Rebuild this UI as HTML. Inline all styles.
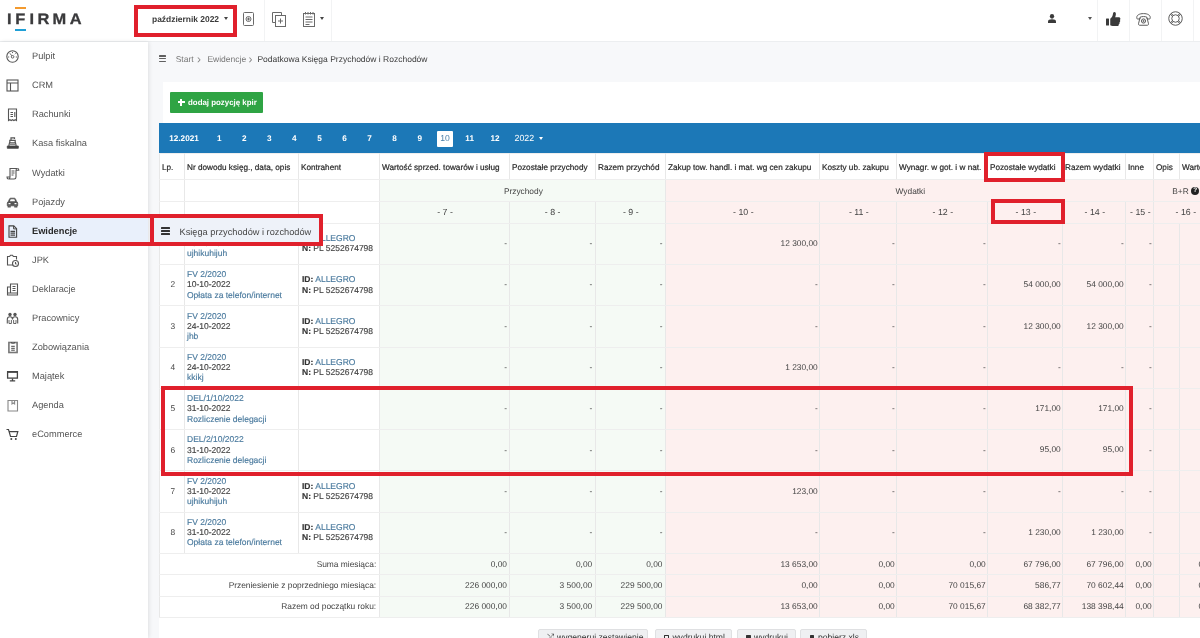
<!DOCTYPE html>
<html lang="pl">
<head>
<meta charset="utf-8">
<title>IFIRMA - Podatkowa Księga Przychodów i Rozchodów</title>
<style>
*{box-sizing:border-box;margin:0;padding:0}
html,body{text-rendering:geometricPrecision;width:1200px;height:638px;overflow:hidden;background:#f7f8fa;font-family:"Liberation Sans",Arial,sans-serif;color:#444;}
body{position:relative}
.abs{position:absolute}
#topbar{left:0;top:0;width:1200px;height:42px;background:#fff;border-bottom:1px solid #eceef0}
#topbar .sep{position:absolute;top:0;width:1px;height:41px;background:#f2f3f4}
#topbar svg{position:absolute;overflow:visible}
#month{position:absolute;left:152px;top:13px;font-size:8.45px;font-weight:bold;color:#3a3a3a;line-height:12px;white-space:nowrap}
.caret{position:absolute;width:0;height:0;border-left:2.5px solid transparent;border-right:2.5px solid transparent;border-top:3px solid #444}
#sidebar{left:0;top:42px;width:148px;height:596px;background:#fff;box-shadow:1px 0 4px rgba(0,0,0,.10)}
.logo{position:absolute;left:8px;top:9px;font-size:17.5px;letter-spacing:3.4px;font-weight:bold;color:#3a3a3c;line-height:22px}
.mi{position:absolute;left:0;width:148px;height:29px;font-size:9.25px;line-height:29px;color:#555}
.mi span{position:absolute;left:32px;top:0}
.mi svg{position:absolute;left:5px;top:7px;width:15px;height:15px;stroke:#555;fill:none;stroke-width:1.1;overflow:visible}
.mi.act{background:#e9f0fb;color:#2a2a2a;font-weight:bold}
.red{position:absolute;border:4px solid #e0202c;z-index:20}
#crumb{left:159px;top:53px;font-size:8.5px;line-height:12px;white-space:nowrap}
#crumb span{position:absolute;top:0}
#crumb .hb i{background:#606060;height:1.400px;margin-bottom:1.300px}
#crumb .ch{color:#888;font-size:12px;top:.3px}
#card{left:163px;top:82px;width:1037px;height:80px;background:#fff}
#card2{left:159px;top:153px;width:1041px;height:490px;background:#fff}
#addbtn{left:170px;top:92px;width:93px;height:20.500px;background:#2fa444;color:#fff;font-size:7.900px;font-weight:bold;line-height:22.500px;padding-left:18px;border-radius:1px;white-space:nowrap}
.plus{position:absolute;left:7.500px;top:6.700px;width:7.500px;height:7.500px}
.plus:before{content:"";position:absolute;left:0;top:2.800px;width:7.500px;height:1.900px;background:#fff}
.plus:after{content:"";position:absolute;left:2.800px;top:0;width:1.900px;height:7.500px;background:#fff}
#bluebar{left:159px;top:123px;width:1041px;height:30px;background:#1c78b7;color:#fff;font-size:8.200px;font-weight:bold;line-height:32px}
#bluebar span{position:absolute;top:0;transform:translateX(-50%);white-space:nowrap}
#bluebar span.sel{font-weight:normal;font-size:8.600px;background:#fff;color:#4a7fa8;top:7.500px;width:16px;height:16px;line-height:15px;text-align:center;border-radius:1px}
table{border-collapse:collapse;table-layout:fixed;position:absolute;left:159px;top:153px;width:1057px;font-size:8.35px;color:#444}
td,th{border:1px solid #e8e8e8;border-top-color:#eeeeee;border-bottom-color:#eeeeee;padding:0 1.300px 0 3px;overflow:hidden;white-space:nowrap;font-weight:normal}
th{text-align:left;color:#222;height:26px;font-size:8.2px;background:#fff;padding:1px 0 0 2px;-webkit-text-stroke:.2px #333}
tr.g td{height:22px;text-align:center;padding-top:1px}
tr.n td{height:21.7px;text-align:center;padding-top:0;font-size:8.8px}
tr.d td{height:41.3px;text-align:right;line-height:10.3px;padding-top:0;padding-bottom:1.500px}
tr.s td{height:21.3px;text-align:right;padding-bottom:1px;font-size:8.4px}
tr.d td.l{-webkit-text-stroke:.15px;text-align:left;font-size:8.5px;line-height:10.2px;padding-top:0;padding-bottom:1.2px}
tr.d td.l2{padding-left:2px}
tr.d td.m{padding-top:0;padding-bottom:1.200px}
tr.d td.c{text-align:center;padding-top:0;padding-bottom:1px}
.gr{background:#f5faf5}
td.g9{padding-right:2.500px}
td.g7{padding-right:2px}
td.g8{padding-right:2.800px}
td.lab{padding-right:2.800px}
.rd{background:#fdf0ef}
a{color:#4a7a9e;text-decoration:none}
b.k{color:#333}
i.q{display:inline-block;width:8.400px;height:8.400px;border-radius:50%;background:#222;color:#fff;font-style:normal;font-size:6.500px;line-height:8.500px;text-align:center;font-weight:bold;vertical-align:1.500px;position:relative;top:-1px}
.btn{position:absolute;top:629px;height:22px;background:#eff0f2;border:1px solid #dfe0e2;font-size:8.600px;line-height:15.600px;color:#333;white-space:nowrap;border-radius:2px}
.btn span{position:absolute;top:0}
.btn i{position:absolute;top:0;font-style:normal;font-size:9px}
.btn i.fo{top:5px;width:4.500px;height:6px;border:1px solid #333;border-radius:.5px}
.btn i.ff{top:5px;width:4.500px;height:6px;background:#333;border-radius:.5px}
#kpir{position:absolute;left:150px;top:215px;width:171px;height:28px;background:#eef2f9;z-index:10;font-size:9.22px;line-height:28px;color:#444;white-space:nowrap}
.hb{position:absolute;width:9px;height:9px}
.hb i{display:block;height:1.7px;background:#333;margin-bottom:1.500px;border-radius:.5px}
#wrap{position:absolute;left:0;top:0;width:1200px;height:638px;overflow:hidden;will-change:transform}
</style>
</head>
<body><div id="wrap">
<div id="topbar" class="abs">
 <svg style="left:0;top:0" width="100" height="42"><text transform="scale(1.08,1)" x="6.57 14.12 27.41 34.63 48.52 64.54" y="24.400" font-family="Liberation Sans, Arial, sans-serif" font-weight="bold" font-size="15.200" fill="#3a3a3c" stroke="#3a3a3c" stroke-width=".3">IFIRMA</text></svg>
 <div class="abs" style="left:15px;top:6.700px;width:10.500px;height:2.200px;background:#f39a2e"></div>
 <div class="abs" style="left:15px;top:28.700px;width:10.800px;height:2.200px;background:#1f9fd6"></div>
 <div id="month">październik 2022</div>
 <div class="caret" style="left:223.5px;top:17px"></div>
 <div class="sep" style="left:264px"></div>
 <div class="sep" style="left:331px"></div>
 <svg style="left:243px;top:12px" width="11" height="14" viewBox="0 0 11 14" fill="none" stroke="#6a6a6a" stroke-width="1"><rect x=".5" y=".5" width="10" height="13" rx="1"/><circle cx="5.500" cy="7" r="2.500"/><path d="M4 7h3M5.500 5.500v3"/></svg>
 <svg style="left:272px;top:11.500px" width="14" height="15" viewBox="0 0 14 15" fill="none" stroke="#6a6a6a" stroke-width="1"><path d="M3.500 10.500H.5V.5h9v3"/><rect x="3.500" y="3.500" width="10" height="11" fill="#fff"/><path d="M6 9h5M8.500 6.500v5"/></svg>
 <svg style="left:303px;top:11.500px" width="12" height="15" viewBox="0 0 12 15" fill="none" stroke="#6a6a6a" stroke-width="1"><rect x=".5" y="1.500" width="11" height="13"/><path d="M2.500 0v2.500M5 0v2.500M7.500 0v2.500M10 0v2.500M2.500 5h7M2.500 7.500h7M2.500 10h7M2.500 12.500h4"/></svg>
 <div class="caret" style="left:319.500px;top:17px"></div>
 <svg style="left:1047.700px;top:14.200px" width="8" height="9" viewBox="0 0 9 9.500" preserveAspectRatio="none" fill="#3a3a3a"><circle cx="4.500" cy="2.500" r="2.400"/><path d="M0 9.500V7.800C0 6.300 1.500 5.500 4.500 5.500S9 6.300 9 7.800V9.500z"/></svg>
 <div class="caret" style="left:1088px;top:17px;border-top-color:#555"></div>
 <div class="sep" style="left:1097px"></div>
 <svg style="left:1106px;top:12px" width="14.500" height="14" viewBox="0 0 29 28" fill="#3a3a3a"><rect x="0" y="13" width="6" height="14" rx="1"/><path d="M8.500 13.500c3-2 5-6 5.500-10 .2-2 1-3.500 2.800-3.500 2.500 0 3.200 2.500 2.900 5-.2 2-.8 4-1.400 5.500h7c2 0 3.500 1.300 3.500 3 0 1-.5 1.800-1.200 2.300.6.500.9 1.200.9 2 0 1.200-.7 2.100-1.700 2.500.3.400.5 1 .5 1.600 0 1.200-.8 2.200-1.900 2.500.1.300.2.600.2 1 0 1.500-1.300 2.600-3 2.600H13.500c-2 0-3.500-.7-5-1.500z"/></svg>
 <div class="sep" style="left:1129px"></div>
 <svg style="left:1136px;top:12.500px" width="15" height="13" viewBox="0 0 30 26" fill="none" stroke="#555" stroke-width="1.900"><path d="M1.500 9C1.500 4 7 1.200 15 1.200S28.500 4 28.500 9v1.500c0 1-1 1.500-2 1.500h-3c-1 0-1.800-.6-1.800-1.500V8.300c-2-.9-4.300-1.200-6.700-1.200s-4.700.3-6.700 1.200v2.200c0 .9-.8 1.500-1.800 1.500h-3c-1 0-2-.5-2-1.500z"/><path d="M8 9.500L5 21.500c-.3 1.500.5 3 2.500 3h15c2 0 2.800-1.500 2.500-3L22 9.500"/><circle cx="15" cy="16" r="4.200"/><circle cx="15" cy="16" r="1.300"/></svg>
 <div class="sep" style="left:1161px"></div>
 <svg style="left:1168px;top:11px" width="15" height="15" viewBox="0 0 30 30" fill="none" stroke="#555" stroke-width="1.900"><circle cx="15" cy="15" r="13.500"/><circle cx="15" cy="15" r="7.500"/><path d="M5.500 5.500l4.200 4.200M24.500 5.500l-4.200 4.200M5.500 24.500l4.200-4.200M24.500 24.500l-4.200-4.200" stroke-width="3.600"/><path d="M5.500 5.500l4.200 4.200M24.500 5.500l-4.200 4.200M5.500 24.500l4.200-4.200M24.500 24.500l-4.200-4.200" stroke="#fff" stroke-width="1.200"/></svg>
 <div class="sep" style="left:1193px"></div>
</div>
<div class="red" style="left:134px;top:5px;width:103px;height:32px"></div>
<div id="sidebar" class="abs">
 <div class="mi" style="top:0.1px"><svg viewBox="0 0 15 15"><circle cx="7.500" cy="7.500" r="5.700"/><circle cx="7.600" cy="7.800" r="1.300" stroke-width=".9"/><path d="M6.800 6.800L4.900 4.300M3 8h1.200M10.800 8H12M7.500 3v1.100M10.600 4.400l-.8.800" stroke-width=".9"/></svg><span>Pulpit</span></div>
 <div class="mi" style="top:29.2px"><svg viewBox="0 0 15 15"><rect x="2" y="2" width="11" height="11"/><path d="M2 5h11M5.500 5v8"/></svg><span>CRM</span></div>
 <div class="mi" style="top:58.3px"><svg viewBox="0 0 15 15"><path d="M3.500 2h8v11.500l-1.300-.8-1.300.8-1.400-.8-1.300.8-1.300-.8-1.400.8z"/><path d="M5.500 5.500h2.500M5.500 7.500h2.500M5.500 9.500h2.500M9.800 5v5" /></svg><span>Rachunki</span></div>
 <div class="mi" style="top:87.4px"><svg viewBox="0 0 15 15"><path d="M2.300 10h11v2.300h-11z" fill="#444" stroke="#444" stroke-width=".8"/><path d="M3.800 10l.7-3.200h6l.7 3.200M4.800 6.800V4.300h5.400v2.500M6 4.300V1.800h3.500v1.200" stroke-width="1.200" stroke="#555"/><path d="M4.500 8.400h6" stroke="#777" stroke-width="1"/></svg><span>Kasa fiskalna</span></div>
 <div class="mi" style="top:116.5px"><svg viewBox="0 0 15 15"><path d="M5 2.500h7.500c-1 0-1.500.8-1.500 2v6.500c0 1.200-.7 2-1.800 2H3.500c1 0 1.500-.8 1.500-2z"/><path d="M12.500 2.500c.8 0 1.300.7 1.300 1.700h-2.800M3.500 13c-.9 0-1.500-.8-1.500-2h3M6.500 5h3M6.500 7h3M6.500 9h2"/></svg><span>Wydatki</span></div>
 <div class="mi" style="top:145.6px"><svg viewBox="0 0 15 15"><path d="M2.300 8.200c0-.9.500-1.400 1.100-1.600L4.500 4c.2-.5.600-.8 1.200-.8h3.600c.6 0 1 .3 1.200.8l1.100 2.600c.6.200 1.100.7 1.100 1.600v2.600H2.300z" fill="#555" stroke="#555" stroke-width=".8"/><path d="M3.300 10.800v1h1.800v-1M9.900 10.800v1h1.800v-1" stroke="#555" stroke-width="1.300"/><path d="M4.900 6.200l.8-1.900h3.600l.8 1.900z" fill="#fff" stroke="none"/><path d="M3.500 8.600h2M9.500 8.600h2" stroke="#fff" stroke-width="1.100"/></svg><span>Pojazdy</span></div>
 <div class="mi act" style="top:174.7px"><svg viewBox="0 0 15 15"><path d="M4 1.900h4.800l2.800 2.800v8.500H4z" stroke="#444" stroke-width="1.100"/><path d="M8.600 2v2.900h2.900" stroke="#444" stroke-width="1"/><path d="M5.500 7.300h4.600M5.500 9.200h4.600M5.500 11.100h4.600" stroke="#444" stroke-width="1.200"/></svg><span>Ewidencje</span></div>
 <div class="mi" style="top:203.8px"><svg viewBox="0 0 15 15"><path d="M8 12H2.500V3.500h2l1-1.200h2l1 1.200h3v3"/><circle cx="10.500" cy="10.500" r="3"/><path d="M10.500 9v1.700l1 .6"/></svg><span>JPK</span></div>
 <div class="mi" style="top:232.9px"><svg viewBox="0 0 15 15"><path d="M5.500 2h7v9h-7zM5.500 5H2.500v8h10v-2M7.500 4.500h3M7.500 6.500h3M7.500 8.500h3M2.500 11h3"/></svg><span>Deklaracje</span></div>
 <div class="mi" style="top:262.0px"><svg viewBox="0 0 15 15"><circle cx="5" cy="3.500" r="1.700" fill="#555" stroke="none"/><circle cx="10" cy="3.500" r="1.700" fill="#555" stroke="none"/><path d="M2.300 12.500V8.500c0-1.700 1-2.700 2.700-2.700s2.500 1 2.500 2.700c0-1.700.8-2.700 2.500-2.700s2.700 1 2.700 2.700v4" stroke="#555" stroke-width="1.100"/><path d="M4 9v3.500h2.400V9M8.600 9v3.500H11V9" stroke="#666" stroke-width="1"/></svg><span>Pracownicy</span></div>
 <div class="mi" style="top:291.1px"><svg viewBox="0 0 15 15"><rect x="3.900" y="2.500" width="8.200" height="10" stroke="#777" stroke-width="1.600"/><path d="M6.200 6.300h3.600M6.200 8.300h3.600M6.200 10.200h3.600" stroke="#444" stroke-width="1"/><path d="M6.500 2v1.200h3V2" stroke="#555" stroke-width="1"/></svg><span>Zobowiązania</span></div>
 <div class="mi" style="top:320.2px"><svg viewBox="0 0 15 15"><rect x="2.600" y="2.800" width="9.800" height="6.300" stroke="#444" stroke-width="1.300"/><path d="M2 2.900h11" stroke="#444" stroke-width="1.800"/><path d="M7.500 9.500v2M4.800 11.900h5.400" stroke="#444" stroke-width="1.300"/></svg><span>Majątek</span></div>
 <div class="mi" style="top:349.3px"><svg viewBox="0 0 15 15"><path d="M3 2.500h9.500v10.500H3zM7 2.500v3.500l1.300-1 1.300 1V2.500" stroke="#888"/></svg><span>Agenda</span></div>
 <div class="mi" style="top:378.4px"><svg viewBox="0 0 15 15"><path d="M1.500 2.500h2l2 7h6l1.300-4.800H4.300" stroke="#444" stroke-width="1.200"/><circle cx="6.300" cy="12" r="1" fill="#444" stroke="none"/><circle cx="10.800" cy="12" r="1" fill="#444" stroke="none"/></svg><span>eCommerce</span></div>
</div>
<div class="red" style="left:-0.500px;top:213.700px;width:154.300px;height:32px"></div>
<div id="crumb" class="abs"><span class="hb" style="left:0.300px;top:2.300px;width:7.200px"><i></i><i></i><i></i></span><span style="left:16.700px;color:#777">Start</span><span class="ch" style="left:38px">›</span><span style="left:48.400px;color:#777">Ewidencje</span><span class="ch" style="left:89.500px">›</span><span style="left:98.400px;color:#3c3c3c">Podatkowa Księga Przychodów i Rozchodów</span></div>
<div id="card" class="abs"></div><div id="card2" class="abs"></div>
<div id="addbtn" class="abs"><span class="plus"></span>dodaj pozycję kpir</div>
<div id="bluebar" class="abs">
<span style="left:25px">12.2021</span><span style="left:60.300px">1</span><span style="left:85.300px">2</span><span style="left:110.400px">3</span><span style="left:135.400px">4</span><span style="left:160.500px">5</span><span style="left:185.500px">6</span><span style="left:210.500px">7</span><span style="left:235.500px">8</span><span style="left:260.700px">9</span><span class="sel" style="left:286px">10</span><span style="left:310.700px">11</span><span style="left:336px">12</span><span style="left:365.300px;top:-1px;font-weight:normal;font-size:8.800px">2022</span><div class="caret" style="left:379.800px;top:14px;border-top-color:#fff;border-left-width:2.800px;border-right-width:2.800px"></div>
</div>
<table><colgroup><col style="width:25px"><col style="width:114px"><col style="width:81px"><col style="width:130px"><col style="width:86px"><col style="width:70px"><col style="width:154px"><col style="width:77px"><col style="width:91px"><col style="width:75px"><col style="width:63px"><col style="width:28px"><col style="width:26px"><col style="width:37px"></colgroup><tr class="h"><th>Lp.</th><th>Nr dowodu księg., data, opis</th><th>Kontrahent</th><th>Wartość sprzed. towarów i usług</th><th>Pozostałe przychody</th><th>Razem przychód</th><th>Zakup tow. handl. i mat. wg cen zakupu</th><th>Koszty ub. zakupu</th><th>Wynagr. w got. i w nat.</th><th>Pozostałe wydatki</th><th>Razem wydatki</th><th>Inne</th><th>Opis</th><th>Wartość</th></tr>
<tr class="g"><td></td><td></td><td></td><td class="gr" colspan="3">Przychody</td><td class="rd" colspan="6">Wydatki</td><td class="rd" colspan="2">B+R <i class="q">?</i></td></tr>
<tr class="n"><td class=""></td><td class=""></td><td class=""></td><td class="gr g7">- 7 -</td><td class="gr g8">- 8 -</td><td class="gr g9">- 9 -</td><td class="rd">- 10 -</td><td class="rd">- 11 -</td><td class="rd">- 12 -</td><td class="rd">- 13 -</td><td class="rd">- 14 -</td><td class="rd">- 15 -</td><td class="rd" colspan="2">- 16 -</td></tr>
<tr class="d"><td class="c">1</td><td class="l l2"><a>FV 2/2020</a><br>10-10-2022<br><a>ujhikuhijuh</a></td><td class="l"><b class="k">ID:</b> <a>ALLEGRO</a><br><b class="k">N:</b> PL 5252674798</td><td class="gr g7 m">-</td><td class="gr g8 m">-</td><td class="gr g9 m">-</td><td class="rd">12 300,00</td><td class="rd m">-</td><td class="rd m">-</td><td class="rd m">-</td><td class="rd m">-</td><td class="rd m">-</td><td class="rd"></td><td class="rd"></td></tr>
<tr class="d"><td class="c">2</td><td class="l l2"><a>FV 2/2020</a><br>10-10-2022<br><a>Opłata za telefon/internet</a></td><td class="l"><b class="k">ID:</b> <a>ALLEGRO</a><br><b class="k">N:</b> PL 5252674798</td><td class="gr g7 m">-</td><td class="gr g8 m">-</td><td class="gr g9 m">-</td><td class="rd m">-</td><td class="rd m">-</td><td class="rd m">-</td><td class="rd">54 000,00</td><td class="rd">54 000,00</td><td class="rd m">-</td><td class="rd"></td><td class="rd"></td></tr>
<tr class="d"><td class="c">3</td><td class="l l2"><a>FV 2/2020</a><br>24-10-2022<br><a>jhb</a></td><td class="l"><b class="k">ID:</b> <a>ALLEGRO</a><br><b class="k">N:</b> PL 5252674798</td><td class="gr g7 m">-</td><td class="gr g8 m">-</td><td class="gr g9 m">-</td><td class="rd m">-</td><td class="rd m">-</td><td class="rd m">-</td><td class="rd">12 300,00</td><td class="rd">12 300,00</td><td class="rd m">-</td><td class="rd"></td><td class="rd"></td></tr>
<tr class="d"><td class="c">4</td><td class="l l2"><a>FV 2/2020</a><br>24-10-2022<br><a>kkikj</a></td><td class="l"><b class="k">ID:</b> <a>ALLEGRO</a><br><b class="k">N:</b> PL 5252674798</td><td class="gr g7 m">-</td><td class="gr g8 m">-</td><td class="gr g9 m">-</td><td class="rd">1 230,00</td><td class="rd m">-</td><td class="rd m">-</td><td class="rd m">-</td><td class="rd m">-</td><td class="rd m">-</td><td class="rd"></td><td class="rd"></td></tr>
<tr class="d"><td class="c">5</td><td class="l l2"><a>DEL/1/10/2022</a><br>31-10-2022<br><a>Rozliczenie delegacji</a></td><td class="l"></td><td class="gr g7 m">-</td><td class="gr g8 m">-</td><td class="gr g9 m">-</td><td class="rd m">-</td><td class="rd m">-</td><td class="rd m">-</td><td class="rd">171,00</td><td class="rd">171,00</td><td class="rd m">-</td><td class="rd"></td><td class="rd"></td></tr>
<tr class="d"><td class="c">6</td><td class="l l2"><a>DEL/2/10/2022</a><br>31-10-2022<br><a>Rozliczenie delegacji</a></td><td class="l"></td><td class="gr g7 m">-</td><td class="gr g8 m">-</td><td class="gr g9 m">-</td><td class="rd m">-</td><td class="rd m">-</td><td class="rd m">-</td><td class="rd">95,00</td><td class="rd">95,00</td><td class="rd m">-</td><td class="rd"></td><td class="rd"></td></tr>
<tr class="d"><td class="c">7</td><td class="l l2"><a>FV 2/2020</a><br>31-10-2022<br><a>ujhikuhijuh</a></td><td class="l"><b class="k">ID:</b> <a>ALLEGRO</a><br><b class="k">N:</b> PL 5252674798</td><td class="gr g7 m">-</td><td class="gr g8 m">-</td><td class="gr g9 m">-</td><td class="rd">123,00</td><td class="rd m">-</td><td class="rd m">-</td><td class="rd m">-</td><td class="rd m">-</td><td class="rd m">-</td><td class="rd"></td><td class="rd"></td></tr>
<tr class="d"><td class="c">8</td><td class="l l2"><a>FV 2/2020</a><br>31-10-2022<br><a>Opłata za telefon/internet</a></td><td class="l"><b class="k">ID:</b> <a>ALLEGRO</a><br><b class="k">N:</b> PL 5252674798</td><td class="gr g7 m">-</td><td class="gr g8 m">-</td><td class="gr g9 m">-</td><td class="rd m">-</td><td class="rd m">-</td><td class="rd m">-</td><td class="rd">1 230,00</td><td class="rd">1 230,00</td><td class="rd m">-</td><td class="rd"></td><td class="rd"></td></tr>
<tr class="s"><td class="lab" colspan="3">Suma miesiąca:</td><td class="gr g7">0,00</td><td class="gr g8">0,00</td><td class="gr g9">0,00</td><td class="rd">13 653,00</td><td class="rd">0,00</td><td class="rd">0,00</td><td class="rd">67 796,00</td><td class="rd">67 796,00</td><td class="rd">0,00</td><td class="rd"></td><td class="rd">0,00</td></tr>
<tr class="s"><td class="lab" colspan="3">Przeniesienie z poprzedniego miesiąca:</td><td class="gr g7">226 000,00</td><td class="gr g8">3 500,00</td><td class="gr g9">229 500,00</td><td class="rd">0,00</td><td class="rd">0,00</td><td class="rd">70 015,67</td><td class="rd">586,77</td><td class="rd">70 602,44</td><td class="rd">0,00</td><td class="rd"></td><td class="rd">0,00</td></tr>
<tr class="s"><td class="lab" colspan="3">Razem od początku roku:</td><td class="gr g7">226 000,00</td><td class="gr g8">3 500,00</td><td class="gr g9">229 500,00</td><td class="rd">13 653,00</td><td class="rd">0,00</td><td class="rd">70 015,67</td><td class="rd">68 382,77</td><td class="rd">138 398,44</td><td class="rd">0,00</td><td class="rd"></td><td class="rd">0,00</td></tr>
</table>
<div id="kpir"><span class="hb" style="left:11px;top:12px"><i></i><i></i><i></i></span><span style="position:absolute;left:29.500px;top:2.700px">Księga przychodów i rozchodów</span></div>
<div class="red" style="left:149.800px;top:213.700px;width:173px;height:32px"></div>
<div class="red" style="left:984.200px;top:152px;width:81px;height:30px"></div>
<div class="red" style="left:991px;top:199px;width:74px;height:25.300px"></div>
<div class="red" style="left:161.200px;top:385.700px;width:972px;height:90.700px"></div>
<div class="btn" style="left:537.500px;width:110.500px"><i style="left:8.500px">⤮</i><span style="left:18.500px">wygeneruj zestawienie</span></div>
<div class="btn" style="left:655px;width:77px"><i class="fo" style="left:8px"></i><span style="left:16.400px">wydrukuj html</span></div>
<div class="btn" style="left:736.500px;width:59px"><i class="ff" style="left:8.500px"></i><span style="left:16.500px">wydrukuj</span></div>
<div class="btn" style="left:799.700px;width:67px"><i class="ff" style="left:9.300px"></i><span style="left:17.300px">pobierz xls</span></div>
</div></body>
</html>
